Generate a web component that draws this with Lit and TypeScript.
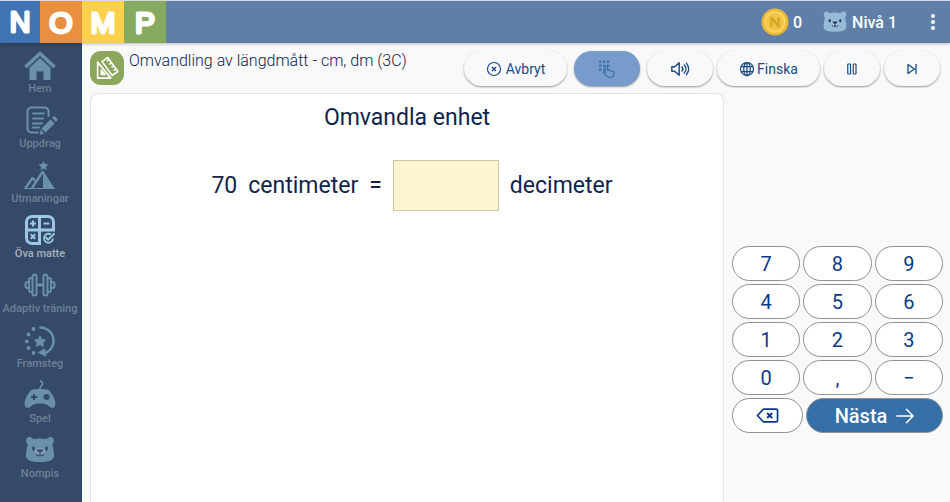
import { LitElement, html, svg, css } from "lit";
import { customElement, property } from "lit/decorators.js";

const bearHead = svg`
  <path fill="var(--fur, currentColor)" d="M3 9.500C1.500 7 2 3.500 5 3c2-.3 3.500.8 4.300 2.300 4-1.200 9.400-1.200 13.400 0C23.500 3.800 25 2.700 27 3c3 .5 3.500 4 2 6.500-.2.400-.5.700-.8 1 1 3 1.800 7.500 1.800 11 0 5-5.500 6.500-14 6.500S2 26.500 2 21.500c0-3.500.8-8 1.800-11-.3-.3-.6-.6-.8-1z"/>
  <ellipse cx="16" cy="18" rx="5" ry="4" fill="#fff" opacity=".18"/>
  <g fill="var(--face, #34495f)"><ellipse cx="9.500" cy="14.500" rx="1.400" ry="2.200"/><ellipse cx="22.500" cy="14.500" rx="1.400" ry="2.200"/>
  <path d="M13 15.500h6c.4 1.600-1.500 3-3 3s-3.400-1.400-3-3z"/></g>
  <path d="M16 18v2.500m-3.500-.5c.5 2.300 3 2.300 3.500.5.500 1.800 3 1.800 3.500-.5" fill="none" stroke="var(--face, #34495f)" stroke-width="1.200" stroke-linecap="round"/>`;

const icons: Record<string, unknown> = {
  home: svg`<path d="M1.500 18 16 4.500 30.500 18" fill="none" stroke="currentColor" stroke-width="3.600" stroke-linejoin="round"/>
    <path d="M5.500 18.500 16 9l10.500 9.500V31h-7v-8.500h-7V31h-7z" fill="currentColor"/>`,
  tasks: svg`<g fill="none" stroke="currentColor" stroke-width="2" stroke-linecap="round">
      <path d="M24.500 12V7.500a4 4 0 0 0-4-4h-13a4 4 0 0 0-4 4v17a4 4 0 0 0 4 4H14"/><path d="M9 9.500h11M9 14.500h10M9 19.500h9M9 23.500h6"/></g>
    <path d="m26.500 15.500 4 4-9 9-4-4zM28 14l1.200-1.200a1.500 1.500 0 0 1 2.100 0l1.800 1.800a1.500 1.500 0 0 1 0 2.100L32 18zM16.500 25.700l3.800 3.800-4.600 1.600z" fill="currentColor"/>`,
  peaks: svg`<path d="m19.500 2 1.500 3.100 3.400.4-2.500 2.400.7 3.400-3.100-1.700-3.100 1.700.7-3.400-2.500-2.400 3.400-.4z" fill="currentColor"/>
    <path d="M1.500 29 8.500 19l3 3M8 29l10.500-16" fill="none" stroke="currentColor" stroke-width="2.400" stroke-linejoin="round" stroke-linecap="round"/>
    <path d="M19 11.500 31 30H19z" fill="currentColor"/><path d="M1 29.500h6M8 29.500h12" stroke="currentColor" stroke-width="1"/>`,
  practice: svg`<rect x="1" y="1" width="30" height="30" rx="7" fill="#9cc8e6"/>
    <path d="M4 8a4 4 0 0 1 4-4h6v10.500H4zM17 4h7a4 4 0 0 1 4 4v6.500H17zM4 17.500h10V28H8a4 4 0 0 1-4-4zM17 17.500h15V32H17z" fill="#344a68"/>
    <path d="M6 9.500h6M9 6.500v6M19.500 9.500h6M6.800 20.300l4.400 4.400m0-4.400-4.400 4.400" stroke="#9cc8e6" stroke-width="2" fill="none"/>
    <path d="M27 20.500a4.500 4.500 0 1 0 2 4" stroke="#9cc8e6" stroke-width="1.800" fill="none"/><path d="m21.500 23 2.700 2.700 6.300-6.300" stroke="#9cc8e6" stroke-width="2" fill="none"/>`,
  dumbbell: svg`<g fill="none" stroke="currentColor" stroke-width="2"><rect x="8.500" y="5.500" width="4" height="21" rx="2"/><rect x="19.500" y="5.500" width="4" height="21" rx="2"/>
    <path d="M8.500 9H7a2 2 0 0 0-2 2v10a2 2 0 0 0 2 2h1.500M23.500 9H25a2 2 0 0 1 2 2v10a2 2 0 0 1-2 2h-1.500M5 13H3.500a2 2 0 0 0-2 2v2a2 2 0 0 0 2 2H5M27 13h1.500a2 2 0 0 1 2 2v2a2 2 0 0 1-2 2H27"/><path d="M12.500 16h7" stroke-width="3"/></g>`,
  progress: svg`<path d="M16.500 3.500a13.300 13.300 0 0 1 3 26.200" fill="none" stroke="currentColor" stroke-width="2.400" stroke-linecap="round"/>
    <path d="m14.500 28.500 6-3.500 1.500 7z" fill="currentColor" stroke="currentColor" stroke-linejoin="round"/>
    <g fill="currentColor"><circle cx="9.500" cy="5" r="1.900"/><circle cx="4.500" cy="10.500" r="1.900"/><circle cx="2.800" cy="17.500" r="1.900"/><circle cx="4.500" cy="24" r="1.900"/><circle cx="9.500" cy="29" r="1.900"/>
    <path d="m16 12 1.700 3.500 3.800.5-2.800 2.700.7 3.800-3.400-1.900-3.400 1.900.7-3.800-2.800-2.700 3.800-.5z" stroke="currentColor" stroke-linejoin="round"/></g>`,
  game: svg`<path d="M16 12V9.500c0-3 3.500-2.500 2.500-5.500-.6-1.600-2.500-1-2-3" fill="none" stroke="currentColor" stroke-width="1.600"/>
    <path d="M8.500 10.500c3-.8 12-.8 15 0 3 1 8 9.500 8 14 0 4.500-3.500 5.500-6 3.300-2-2-3.500-3.300-9.500-3.300s-7.500 1.300-9.500 3.300c-2.500 2.200-6 1.200-6-3.300 0-4.500 5-13 8-14z" fill="currentColor"/>
    <path d="M7 18h6M10 15v6" stroke="#344a68" stroke-width="2"/><circle cx="22.500" cy="18" r="3" fill="#344a68"/>`,
  bear: bearHead,
  ruler: svg`<g fill="none" stroke="#fff" stroke-width="2.200" stroke-linejoin="round"><path d="M3.500 8v21.500H21zM8.500 19v5.500h4.500z"/>
    <path d="M9.500 7.500 17 2l13.500 18.500L23 26zM19 4.800l-3 2.200M22 8.900l-3 2.200M25 13l-3 2.200M28 17.100l-3 2.200"/></g>`,
  cancel: svg`<g fill="none" stroke="currentColor" stroke-width="2.400"><circle cx="16" cy="16" r="13"/><path d="m12 12 8 8m0-8-8 8" stroke-width="2.800"/></g>`,
  touch: svg`<g fill="currentColor"><path d="M2 1h4v4H2zM9 1h4v4H9zM16 1h4v4h-4zM2 8h4v4H2zM9 8h3v4H9zM16 8h4v4h-4zM2 15h4v4H2zM9 15h3v4H9z"/></g>
    <path d="M13 23V12.500a2 2 0 0 1 4 0V18c2-1 3.500-.5 4 1 2-.8 3.300-.3 3.800 1 2.500-.7 3.700.5 3.700 2.500 0 5-1.500 8.500-7 8.500-4 0-6-1.500-8-4l-3.500-5c0-1.500 2-2 3-.5z" fill="none" stroke="currentColor" stroke-width="2"/>`,
  speaker: svg`<g fill="none" stroke="currentColor" stroke-width="2.600" stroke-linejoin="round" stroke-linecap="round"><path d="M1.500 12v8h5l8 7V5l-8 7z"/><path d="M19.500 12.500c1.800 2 1.800 5 0 7M23.500 9c4 4 4 10 0 14M27.500 6c5 6 5 14 0 20"/></g>`,
  globe: svg`<g fill="none" stroke="currentColor" stroke-width="2.500"><circle cx="16" cy="16" r="13"/><ellipse cx="16" cy="16" rx="6.500" ry="13"/><path d="M16 3v26M4 11h24M4 21h24"/></g>`,
  pause: svg`<g fill="none" stroke="currentColor" stroke-width="2.400"><rect x="7.500" y="6" width="5.500" height="20" rx="1"/><rect x="18.500" y="6" width="5.500" height="20" rx="1"/></g>`,
  skip: svg`<path d="M8 7v18l13-9zM24 6v20" fill="none" stroke="currentColor" stroke-width="2.600" stroke-linejoin="round"/>`,
  erase: svg`<path d="M10.500 7H28a2 2 0 0 1 2 2v14a2 2 0 0 1-2 2H10.500L2 16z" fill="none" stroke="currentColor" stroke-width="2.400" stroke-linejoin="round"/><path d="m15.500 12.500 7 7m0-7-7 7" stroke="currentColor" stroke-width="2.600"/>`,
  arrow: svg`<path d="M1.500 16h28M18.500 4l12 12-12 12" fill="none" stroke="currentColor" stroke-width="2.800" stroke-linejoin="round" stroke-linecap="round"/>`,
  coin: svg`<circle cx="16" cy="16" r="15.500" fill="#e9b737"/><circle cx="16" cy="16" r="12.500" fill="#fbd35c"/><circle cx="16" cy="16" r="10" fill="#f0c544"/>
    <path d="M12 21V11l8 10V11" fill="none" stroke="#d9a62c" stroke-width="2.800" stroke-linejoin="round"/>`,
  more: svg`<g fill="#fff"><circle cx="16" cy="4" r="4"/><circle cx="16" cy="16" r="4"/><circle cx="16" cy="28" r="4"/></g>`,
};

@customElement("app-icon")
export class AppIcon extends LitElement {
  @property() name = "";

  static styles = css`
    :host { display: block; flex: none; width: 16px; height: 16px; }
    .art { display: block; width: 100%; height: 100%; overflow: visible; }
  `;

  render() {
    return html`<svg class="art" viewBox="0 0 32 32" aria-hidden="true">${icons[this.name]}</svg>`;
  }
}

const navItems = [
  ["home", "Hem"],
  ["tasks", "Uppdrag"],
  ["peaks", "Utmaningar"],
  ["practice", "Öva matte"],
  ["dumbbell", "Adaptiv träning"],
  ["progress", "Framsteg"],
  ["game", "Spel"],
  ["bear", "Nompis"],
];

const keys = ["7", "8", "9", "4", "5", "6", "1", "2", "3", "0", ",", "−"];

@customElement("app-root")
export class AppRoot extends LitElement {
  static styles = css`
    :host {
      display: flex;
      flex-direction: column;
      min-height: 100vh;
      background: #f9f9f9;
      color: #10254b;
      font-family: Roboto, "Liberation Sans", sans-serif;
    }
    * { box-sizing: border-box; }
    button { font: inherit; margin: 0; cursor: pointer; }

    .header {
      display: flex;
      align-items: center;
      height: 43px;
      padding-right: 9px;
      background: #5f7fa8;
      border-top: 1px solid #d5dae2;
      box-shadow: 0 1px 3px rgba(0, 0, 0, 0.25);
      color: #fff;
      font-size: 16px;
      font-weight: 500;
      z-index: 1;
    }
    .logo { display: flex; margin-right: auto; }
    .tile { display: block; width: 42px; height: 42px; }
    .tile:first-child { width: 40px; }
    .letter {
      fill: #fff;
      stroke: #fff;
      stroke-width: 3px;
      stroke-linejoin: round;
      font: 30px "Liberation Sans", sans-serif;
      text-anchor: middle;
    }
    .n { background: #3f73b4; }
    .o { background: #e8903f; }
    .m { background: #f9d14b; }
    .p { background: #85aa60; }
    .stat { display: flex; align-items: center; gap: 4px; margin-right: 20px; }
    .coin { width: 28px; height: 28px; }
    .avatar { width: 26px; height: 26px; --fur: #96bbd8; --face: #24405f; }
    .menu { padding: 0; margin-left: 8px; background: none; border: 0; }

    .body { display: flex; flex: 1; }
    .sidebar {
      flex: none;
      width: 82px;
      background: #344a68;
      box-shadow: inset -1px 0 #27466f;
      padding: 6px 2px 0 0;
    }
    .nav {
      display: flex;
      flex-direction: column;
      align-items: center;
      gap: 1px;
      height: 55px;
      color: #708095;
      font-size: 11px;
      font-weight: 500;
      line-height: 14px;
      white-space: nowrap;
      text-decoration: none;
    }
    .nav app-icon { width: 32px; height: 32px; color: #6a8fab; --face: #344a68; }
    .nav.active { color: #a9b2be; }

    .main { flex: 1; min-width: 0; display: flex; flex-direction: column; padding: 0 7px 0 8px; }
    .toolbar { display: flex; align-items: flex-start; padding: 8px 3px 7px 0; }
    .subject {
      flex: none;
      width: 34px;
      height: 34px;
      padding: 5px;
      border-radius: 11px;
      background: #8ba75b;
    }
    .subject app-icon { width: 24px; height: 24px; }
    .title { margin: 0 auto 0 5px; font-size: 16px; font-weight: 300; line-height: 20px; white-space: nowrap; }
    .tools { display: flex; gap: 4px; }
    .pill {
      display: flex;
      align-items: center;
      justify-content: center;
      width: 56px;
      height: 35px;
      padding: 0;
      border: 0;
      border-radius: 18px;
      background: #f9f9fc;
      box-shadow: 0 1px 2px rgba(0, 0, 0, 0.4);
      color: #174a84;
      font-size: 14px;
      gap: 2px;
    }
    .pill.wide { width: 103px; }
    .pill.mid { width: 66px; }
    .pill.spaced { margin-right: 3px; gap: 4px; }
    .pill.on { background: #779ccc; color: #3d6fa8; }
    .pill .large { width: 18px; height: 18px; }

    .work { flex: 1; display: flex; gap: 8px; }
    .panel {
      flex: 1;
      min-width: 0;
      padding: 8px 8px 0;
      background: #fff;
      border: 1px solid #e4e5e7;
      border-bottom: 0;
      border-radius: 8px 8px 0 0;
      text-align: center;
    }
    .heading { margin: 0 0 26px; font-size: 23px; font-weight: 400; line-height: 32px; }
    .equation {
      display: flex;
      align-items: center;
      justify-content: center;
      gap: 11px;
      padding-left: 10px;
      font-size: 23px;
      line-height: 32px;
    }
    .answer {
      width: 106px;
      height: 51px;
      padding: 0 8px;
      border: 1px solid #cfc7a3;
      background: #fff4d2;
      color: inherit;
      font: inherit;
      text-align: center;
    }
    .keypad { flex: none; width: 211px; display: flex; flex-direction: column; gap: 3px; justify-content: flex-end; padding-bottom: 69px; }
    .digits { display: grid; grid-template-columns: repeat(3, 1fr); gap: 3px; }
    .key {
      display: flex;
      align-items: center;
      justify-content: center;
      height: 35px;
      padding: 0;
      border: 1px solid #8d9096;
      border-radius: 18px;
      background: #fff;
      color: #0b3a86;
      font-size: 20px;
    }
    .actions { display: flex; gap: 3px; }
    .erase { width: 71px; }
    .erase app-icon { width: 23px; height: 23px; }
    .next { flex: 1; gap: 9px; background: #356fa8; color: #fff; font-weight: 500; }
    .next app-icon { width: 18px; height: 18px; }
  `;

  private pill(icon: string, label: string, classes = "", text = "") {
    const size = icon === "touch" || icon === "speaker" ? "large" : "";
    return html`<button class="pill ${classes}" aria-label=${label}><app-icon name=${icon} class=${size}></app-icon>${text}</button>`;
  }

  render() {
    return html`
      <header class="header">
        <div class="logo">
          ${["N", "O", "M", "P"].map(
            (c) => html`<svg class="tile ${c.toLowerCase()}" viewBox="0 0 42 42"><text class="letter" x="21" y="32">${c}</text></svg>`
          )}
        </div>
        <span class="stat"><app-icon class="coin" name="coin"></app-icon>0</span>
        <span class="stat"><app-icon class="avatar" name="bear"></app-icon>Nivå 1</span>
        <button class="menu" aria-label="Meny"><app-icon name="more"></app-icon></button>
      </header>
      <div class="body">
        <nav class="sidebar">
          ${navItems.map(
            ([icon, label]) => html`<a class="nav ${icon === "practice" ? "active" : ""}" href="#${icon}"><app-icon name=${icon}></app-icon>${label}</a>`
          )}
        </nav>
        <main class="main">
          <div class="toolbar">
            <div class="subject"><app-icon name="ruler"></app-icon></div>
            <h1 class="title">Omvandling av längdmått - cm, dm (3C)</h1>
            <div class="tools">
              ${this.pill("cancel", "Avbryt", "wide spaced", "Avbryt")}
              ${this.pill("touch", "Knappsats", "mid on spaced")}
              ${this.pill("speaker", "Läs upp", "mid")}
              ${this.pill("globe", "Finska", "wide", "Finska")}
              ${this.pill("pause", "Paus")}
              ${this.pill("skip", "Hoppa över")}
            </div>
          </div>
          <div class="work">
            <section class="panel">
              <h2 class="heading">Omvandla enhet</h2>
              <div class="equation">
                <span>70</span><span>centimeter</span><span>=</span>
                <input class="answer" aria-label="Svar i decimeter" />
                <span>decimeter</span>
              </div>
            </section>
            <aside class="keypad">
              <div class="digits">${keys.map((k) => html`<button class="key">${k}</button>`)}</div>
              <div class="actions">
                <button class="key erase" aria-label="Radera"><app-icon name="erase"></app-icon></button>
                <button class="key next">Nästa <app-icon name="arrow"></app-icon></button>
              </div>
            </aside>
          </div>
        </main>
      </div>
    `;
  }
}
